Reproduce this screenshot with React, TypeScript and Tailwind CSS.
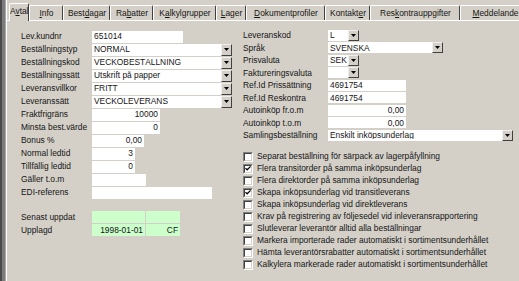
import React from "react"

type Tab = { label: string; u: number; w: string }

const tabs: Tab[] = [
  { label: "Info", u: 0, w: "w-[34px]" },
  { label: "Bestdagar", u: 4, w: "w-[47px]" },
  { label: "Rabatter", u: 2, w: "w-[43px]" },
  { label: "Kalkylgrupper", u: 1, w: "w-[63px]" },
  { label: "Lager", u: 0, w: "w-[30px]" },
  { label: "Dokumentprofiler", u: 0, w: "w-[79px]" },
  { label: "Kontakter", u: 7, w: "w-[45px]" },
  { label: "Reskontrauppgifter", u: 3, w: "w-[90px]" },
  { label: "Meddelande", u: 0, w: "w-[70px]" },
]

function Accel({ text, u }: { text: string; u: number }) {
  return (
    <span>
      {text.slice(0, u)}
      <span className="underline underline-offset-[1px]">{text[u]}</span>
      {text.slice(u + 1)}
    </span>
  )
}

function DropButton() {
  return (
    <div className="w-[11px] h-full shrink-0 bg-[#d4d0c8] border-t border-l border-t-[#f0f0f0] border-l-[#f0f0f0] border-r border-b border-r-[#404040] border-b-[#404040] flex items-center justify-center">
      <svg width="5" height="3" viewBox="0 0 5 3">
        <path d="M0 0h5L2.5 3z" fill="#000" />
      </svg>
    </div>
  )
}

type FieldProps = {
  label: string
  w: string
  value?: string
  right?: boolean
  drop?: boolean
  labelW: string
  h: string
  boxH: string
}

function Field({ label, w, value = "", right, drop, labelW, h, boxH }: FieldProps) {
  return (
    <div className={`flex items-center ${h}`}>
      <div className={`${labelW} shrink-0 whitespace-nowrap`}>{label}</div>
      <div className={`${w} ${boxH} bg-white flex items-center`}>
        <div className={`flex-1 px-[2px] whitespace-nowrap overflow-hidden ${right ? "text-right" : ""}`}>{value}</div>
        {drop && <DropButton />}
      </div>
    </div>
  )
}

function Check({ label, checked }: { label: string; checked?: boolean }) {
  return (
    <div className="flex items-center h-[12px]">
      <div className="w-[10px] h-[10px] shrink-0 bg-white border-t border-l border-t-[#808080] border-l-[#808080] border-r border-b border-r-white border-b-white">
        <div className="w-full h-full border-t border-l border-t-[#404040] border-l-[#404040] border-r border-b border-r-[#d4d0c8] border-b-[#d4d0c8] flex items-center justify-center">
          {checked && (
            <svg width="7" height="7" viewBox="0 0 7 7">
              <path d="M0.5 3l2 2 4-4" stroke="#000" strokeWidth="1.4" fill="none" />
            </svg>
          )}
        </div>
      </div>
      <div className="ml-[4px] whitespace-nowrap">{label}</div>
    </div>
  )
}

const leftFields = [
  { label: "Lev.kundnr", w: "w-[91px]", value: "651014" },
  { label: "Beställningstyp", w: "w-[140px]", value: "NORMAL", drop: true },
  { label: "Beställningskod", w: "w-[140px]", value: "VECKOBESTÄLLNING", drop: true },
  { label: "Beställningssätt", w: "w-[140px]", value: "Utskrift på papper", drop: true },
  { label: "Leveransvillkor", w: "w-[140px]", value: "FRITT", drop: true },
  { label: "Leveranssätt", w: "w-[140px]", value: "VECKOLEVERANS", drop: true },
  { label: "Fraktfrigräns", w: "w-[68px]", value: "10000", right: true },
  { label: "Minsta best.värde", w: "w-[68px]", value: "0", right: true },
  { label: "Bonus %", w: "w-[52px]", value: "0,00", right: true },
  { label: "Normal ledtid", w: "w-[43px]", value: "3", right: true },
  { label: "Tillfällig ledtid", w: "w-[43px]", value: "0", right: true },
  { label: "Gäller t.o.m", w: "w-[54px]", value: "" },
  { label: "EDI-referens", w: "w-[120px]", value: "" },
]

const rightFields = [
  { label: "Leveranskod", w: "w-[31px]", value: "L", drop: true },
  { label: "Språk", w: "w-[115px]", value: "SVENSKA", drop: true },
  { label: "Prisvaluta", w: "w-[31px]", value: "SEK", drop: true },
  { label: "Faktureringsvaluta", w: "w-[31px]", value: "", drop: true },
  { label: "Ref.Id Prissättning", w: "w-[78px]", value: "4691754" },
  { label: "Ref.Id Reskontra", w: "w-[78px]", value: "4691754" },
  { label: "Autoinköp fr.o.m", w: "w-[78px]", value: "0,00", right: true },
  { label: "Autoinköp t.o.m", w: "w-[78px]", value: "0,00", right: true },
  { label: "Samlingsbeställning", w: "w-[185px]", value: "Enskilt inköpsunderlag", drop: true },
]

const checks = [
  { label: "Separat beställning för särpack av lagerpåfyllning" },
  { label: "Flera transitorder på samma inköpsunderlag", checked: true },
  { label: "Flera direktorder på samma inköpsunderlag" },
  { label: "Skapa inköpsunderlag vid transitleverans", checked: true },
  { label: "Skapa inköpsunderlag vid direktleverans" },
  { label: "Krav på registrering av följesedel vid inleveransrapportering" },
  { label: "Slutleverar leverantör alltid alla beställningar" },
  { label: "Markera importerade rader automatiskt i sortimentsunderhållet" },
  { label: "Hämta leverantörsrabatter automatiskt i sortimentsunderhållet" },
  { label: "Kalkylera markerade rader automatiskt i sortimentsunderhållet" },
]

export default function App() {
  return (
    <div className="w-[519px] h-[281px] overflow-hidden bg-[#d4d0c8] flex text-[8.4px] leading-none text-[#151515] font-['Liberation_Sans',Arial,sans-serif]">
      <div className="flex shrink-0">
        <div className="w-[2px] bg-[#4a4a4a]" />
        <div className="w-[3px] bg-[#7c7c7c]" />
        <div className="w-[1px] bg-[#a8a8a8]" />
      </div>
      <div className="flex-1 flex flex-col min-w-0">
        <div className="h-[20px] flex items-end shrink-0 pl-[2px] border-l border-white">
          <div className="w-[36px] h-[18px] bg-[#d4d0c8] border-t border-l border-white border-r border-r-[#404040] rounded-t-[2px] flex items-center justify-center -mb-[1px] relative z-10 pb-[2px]">
            <Accel text="Avtal" u={1} />
          </div>
          {tabs.map((t) => (
            <div
              key={t.label}
              className={`${t.w} shrink-0 h-[15px] border-t border-l border-white border-r border-r-[#404040] rounded-t-[2px] flex items-center justify-center whitespace-nowrap`}
            >
              <Accel text={t.label} u={t.u} />
            </div>
          ))}
        </div>
        <div className="flex-1 flex border-t border-l border-white">
          <div className="w-[236px] shrink-0 pl-[14px] pt-[9px] flex flex-col">
            {leftFields.map((f) => (
              <Field key={f.label} {...f} labelW="w-[71px]" h="h-[13px]" boxH="h-[12px]" />
            ))}
            <div className="mt-[12px] flex flex-col gap-[1px]">
              <div className="flex items-center h-[12px]">
                <div className="w-[71px]">Senast uppdat</div>
                <div className="w-[53px] h-full bg-[#ccffcc]" />
                <div className="w-[34px] h-full bg-[#ccffcc] ml-[1px]" />
              </div>
              <div className="flex items-center h-[12px]">
                <div className="w-[71px]">Upplagd</div>
                <div className="w-[53px] h-full bg-[#ccffcc] flex items-center justify-end pr-[2px]">1998-01-01</div>
                <div className="w-[34px] h-full bg-[#ccffcc] ml-[1px] flex items-center justify-end pr-[2px]">CF</div>
              </div>
            </div>
          </div>
          <div className="flex-1 pt-[8px] flex flex-col">
            {rightFields.map((f) => (
              <Field key={f.label} {...f} labelW="w-[85px]" h="h-[12.5px]" boxH="h-[11px]" />
            ))}
            <div className="mt-[9px] flex flex-col">
              {checks.map((c) => (
                <Check key={c.label} {...c} />
              ))}
            </div>
          </div>
        </div>
      </div>
    </div>
  )
}
